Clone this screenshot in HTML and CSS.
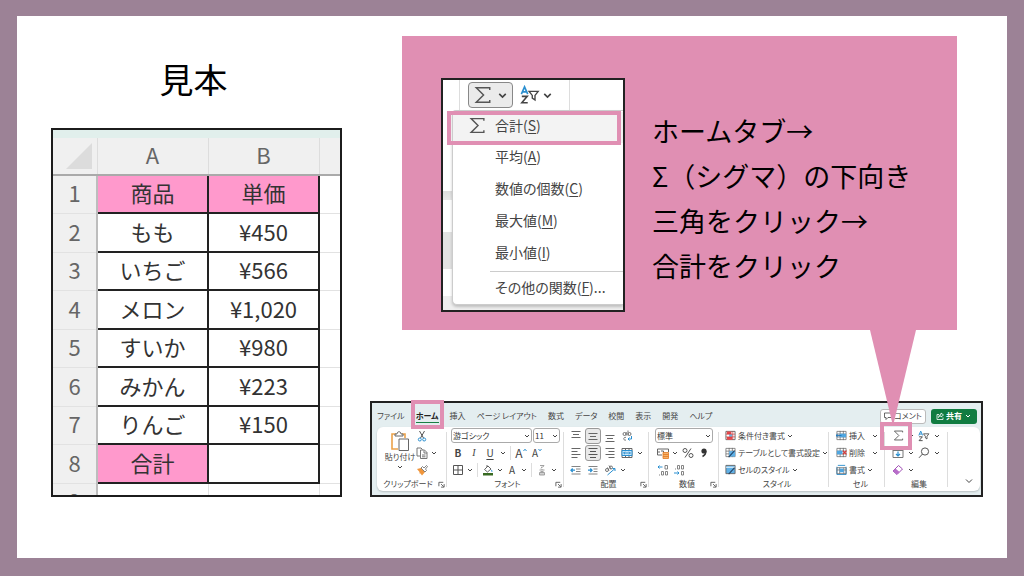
FILE: index.html
```html
<!DOCTYPE html>
<html lang="ja">
<head>
<meta charset="utf-8">
<title>見本</title>
<meta name="viewport" content="width=device-width, initial-scale=1">
<link rel="stylesheet" href="styles.css">
</head>
<body>
<svg class="defs" aria-hidden="true">
  <symbol id="chev" viewBox="0 0 8 8"><path d="M2 3l2 2 2-2" fill="none" stroke="#444" stroke-width="1"/></symbol>
  <symbol id="sigma" viewBox="0 0 16 16"><path d="M14 3.500V1.500H2L8.500 8 2 14.500H14V12.500" fill="none" stroke="#555" stroke-width="1.300"/></symbol>
  <symbol id="launch" viewBox="0 0 8 8"><path d="M1 6V1.500H6M3.500 3.500L6.500 6.500M7 3.500V7H3.500" fill="none" stroke="#555"/></symbol>
  <symbol id="sort" viewBox="0 0 22 20"><path d="M1.500 9L5 1 8.500 9M3 6.500H7" fill="none" stroke="#2a8fd0" stroke-width="1.800"/><path d="M2 11.500H8L2 18.500H8.500" fill="none" stroke="#444" stroke-width="1.700"/><path d="M10 6H20L16.500 10.500V15.500L13.500 13.500V10.500Z" fill="none" stroke="#444" stroke-width="1.500"/></symbol>
  <symbol id="cellgrid" viewBox="0 0 12 12"><path d="M1 1.500H11V10.500H1ZM1 4.500H11M1 7.500H11M4.500 1V11M8 1V11" fill="#fff" stroke="#666" stroke-width=".8"/></symbol>
</svg>
<main class="slide">
  <section class="sample">
    <h1 class="sample-title">見本</h1>
    <div class="sheet">
      <table class="cells">
        <thead>
          <tr><th class="corner"><svg viewBox="0 0 26 26"><path d="M26 0V26H0Z" fill="#dcdcdc"/></svg></th><th class="letter">A</th><th class="letter">B</th><th class="rest"></th></tr>
        </thead>
        <tbody>
          <tr><th>1</th><td class="pink">商品</td><td class="pink">単価</td><td class="blank"></td></tr>
          <tr><th>2</th><td>もも</td><td>¥450</td><td class="blank"></td></tr>
          <tr><th>3</th><td>いちご</td><td>¥566</td><td class="blank"></td></tr>
          <tr><th>4</th><td>メロン</td><td>¥1,020</td><td class="blank"></td></tr>
          <tr><th>5</th><td>すいか</td><td>¥980</td><td class="blank"></td></tr>
          <tr><th>6</th><td>みかん</td><td>¥223</td><td class="blank"></td></tr>
          <tr><th>7</th><td>りんご</td><td>¥150</td><td class="blank"></td></tr>
          <tr><th>8</th><td class="pink">合計</td><td></td><td class="blank"></td></tr>
          <tr><th>9</th><td class="blank"></td><td class="blank"></td><td class="blank"></td></tr>
        </tbody>
      </table>
    </div>
  </section>

  <section class="guide">
    <div class="callout">
      <div class="shot">
        <div class="shot-bar">
          <button class="sum-button" aria-label="合計"><svg class="sum-icon"><use href="#sigma"/></svg><svg class="sum-chev"><use href="#chev"/></svg></button>
          <button class="sort-button" aria-label="並べ替え"><svg class="sort-icon"><use href="#sort"/></svg><svg class="sum-chev"><use href="#chev"/></svg></button>
        </div>
        <div class="menu">
          <button class="item current"><svg class="item-icon"><use href="#sigma"/></svg>合計(<u>S</u>)<span class="ring"></span></button>
          <button class="item">平均(<u>A</u>)</button>
          <button class="item">数値の個数(<u>C</u>)</button>
          <button class="item">最大値(<u>M</u>)</button>
          <button class="item">最小値(<u>I</u>)</button>
          <button class="item more">その他の関数(<u>F</u>)...</button>
        </div>
      </div>
      <p class="steps">ホームタブ→<br>Σ&#xFF08;シグマ&#xFF09;の下向き<br>三角をクリック→<br>合計をクリック</p>
      <span class="tail"></span>
    </div>

    <div class="ribbon">
      <div class="ribbon-top">
        <nav class="tabs">
          <button>ファイル</button><button class="active">ホーム<span class="ring"></span></button><button>挿入</button><button>ページ レイアウト</button><button>数式</button><button>データ</button><button>校閲</button><button>表示</button><button>開発</button><button>ヘルプ</button>
        </nav>
        <button class="comment"><svg viewBox="0 0 8 8"><path d="M.5 1H7.500V5.500H4L2 7.500V5.500H.5Z" fill="none" stroke="#444" stroke-width=".8"/></svg>コメント</button>
        <button class="share"><svg viewBox="0 0 8 8"><path d="M3 2.500H1V7.500H7V5.500M2.500 5.500C3 3 4 2.500 5 2.500V1L7.500 3 5 5V3.800C4 3.800 3 4.300 2.500 5.500Z" fill="none" stroke="#fff" stroke-width=".8"/></svg>共有<svg viewBox="0 0 8 8"><path d="M2 3l2 2 2-2" fill="none" stroke="#fff"/></svg></button>
      </div>
      <div class="panel">
        <div class="group clipboard">
          <div class="paste-area">
            <button class="paste"><svg viewBox="0 0 20 20"><path d="M6 3H2V18H8M12 3H15V7" fill="none" stroke="#eba24a" stroke-width="1.600"/><path d="M5 5V3H7C7 0 11 0 11 3H13V5Z" fill="#fff" stroke="#666"/><path d="M9 8H18.500V19.500H9Z" fill="#fff" stroke="#666"/></svg>貼り付け<svg class="chev"><use href="#chev"/></svg></button>
            <div class="rows">
              <div class="row"><button class="ico" aria-label="切り取り"><svg viewBox="0 0 12 12"><path d="M3.500 1L7.500 8M8.500 1L4.500 8" fill="none" stroke="#555"/><circle cx="3.800" cy="9.500" r="1.500" fill="none" stroke="#2a8fd0"/><circle cx="8.200" cy="9.500" r="1.500" fill="none" stroke="#2a8fd0"/></svg></button></div>
              <div class="row"><button class="ico" aria-label="コピー"><svg viewBox="0 0 12 12"><path d="M4 9H1V1H5L6.500 2.500M4.500 3H8.500L11 5.500V11.500H4.500ZM8 3.500V6H11M6 8H9.500M6 9.800H9.500" fill="none" stroke="#666" stroke-width=".9"/></svg></button><svg class="chev"><use href="#chev"/></svg></div>
              <div class="row"><button class="ico" aria-label="書式のコピー"><svg viewBox="0 0 12 12"><path d="M1 5L5 4 9 8 6 11.500 4.500 9.500 3.500 9.500 3.500 8Z" fill="#f0963c"/><path d="M5 4L6.500 2.500 8 4 10.500 1.500 11.500 2.500 9.500 5 10.500 6.500 9 8Z" fill="#fff" stroke="#666" stroke-width=".8"/></svg></button></div>
            </div>
          </div>
          <div class="caption">クリップボード<svg class="launch"><use href="#launch"/></svg></div>
        </div>

        <div class="group font">
          <div class="row fields"><label class="field wide"><select aria-label="フォント"><option>游ゴシック</option></select><svg class="chev"><use href="#chev"/></svg></label><label class="field"><select aria-label="サイズ"><option>11</option></select><svg class="chev"><use href="#chev"/></svg></label></div>
          <div class="row letters"><button class="ico"><b>B</b></button><button class="ico slant"><i>I</i></button><button class="ico"><u>U</u></button><svg class="chev"><use href="#chev"/></svg><span class="sep"></span><button class="ico big">A<svg class="mark" viewBox="0 0 4 4"><path d="M.5 3L2 1.200 3.500 3" fill="none" stroke="#2a8fd0"/></svg></button><button class="ico">A<svg class="mark" viewBox="0 0 4 4"><path d="M.5 1L2 2.800 3.500 1" fill="none" stroke="#2a8fd0"/></svg></button></div>
          <div class="row letters tight"><button class="ico" aria-label="罫線"><svg viewBox="0 0 12 12"><path d="M1.500 1.500H10.500V10.500H1.500ZM6 1.500V10.500M1.500 6H10.500" fill="none" stroke="#555"/></svg></button><svg class="chev"><use href="#chev"/></svg><span class="sep"></span><button class="ico" aria-label="塗りつぶし"><svg viewBox="0 0 12 12"><path d="M2.500 5.500L6 2 9 5 5.500 8ZM5 3V1" fill="none" stroke="#555" stroke-width=".9"/><path d="M9.500 5.500L10.800 7.500H9Z" fill="#2a8fd0"/><path d="M1 9H11V11.500H1Z" fill="#386a22"/></svg></button><svg class="chev"><use href="#chev"/></svg><button class="ico">A</button><svg class="chev"><use href="#chev"/></svg><span class="sep"></span><button class="ico" aria-label="ふりがな"><svg viewBox="0 0 12 12"><path d="M4 1.500H8L6.500 3.500M6 2.500L5 4.500M3.500 6H8.500M6 5V6M4.500 7.500H7.500M3.500 8.500H8.500V11H3.500ZM5 8.500V11M7 8.500V11" fill="none" stroke="#999" stroke-width=".9"/></svg></button><svg class="chev"><use href="#chev"/></svg></div>
          <div class="caption">フォント<svg class="launch"><use href="#launch"/></svg></div>
        </div>

        <div class="group align">
          <div class="row"><button class="ico" aria-label="上揃え"><svg viewBox="0 0 12 12"><path d="M1.500 1.500H10.500M3 4.500H9M1.500 7.500H10.500" stroke="#666"/></svg></button><button class="ico on" aria-label="上下中央揃え"><svg viewBox="0 0 12 12"><path d="M1.500 3.500H10.500M3 6.500H9M1.500 9.500H10.500" stroke="#666"/></svg></button><button class="ico" aria-label="下揃え"><svg viewBox="0 0 12 12"><path d="M1.500 5.500H10.500M3 8.500H9M1.500 11.500H10.500" stroke="#666"/></svg></button><button class="ico" aria-label="折り返し"><svg viewBox="0 0 12 12"><g fill="none" stroke="#666" stroke-width=".9"><circle cx="3.500" cy="4" r="1.500"/><path d="M5.200 2V5.500M7 .5V5.500"/><circle cx="8.500" cy="4" r="1.500"/><path d="M5 7.500C2 6.500 2 11 5 10"/></g><path d="M10.500 6V9H7M8.500 7.500L7 9 8.500 10.500" fill="none" stroke="#2a8fd0"/></svg></button></div>
          <div class="row"><button class="ico" aria-label="左揃え"><svg viewBox="0 0 12 12"><path d="M1.500 1.500H10.500M1.500 4.500H7.500M1.500 7.500H10.500M1.500 10.500H7.500" stroke="#666"/></svg></button><button class="ico on" aria-label="中央揃え"><svg viewBox="0 0 12 12"><path d="M1.500 1.500H10.500M3 4.500H9M1.500 7.500H10.500M3 10.500H9" stroke="#555"/></svg></button><button class="ico" aria-label="右揃え"><svg viewBox="0 0 12 12"><path d="M1.500 1.500H10.500M4.500 4.500H10.500M1.500 7.500H10.500M4.500 10.500H10.500" stroke="#666"/></svg></button><button class="ico" aria-label="セルを結合"><svg viewBox="0 0 12 12"><path d="M1 1.500H11V10.500H1ZM4.500 1.500V3M8 1.500V3M4.500 9V10.500M8 9V10.500" fill="none" stroke="#666"/><path d="M1 3.500H11V8.500H1Z" fill="#cbe6f7" stroke="#2a8fd0"/><path d="M2.500 6H9.500M4 4.700L2.700 6 4 7.300M8 4.700L9.300 6 8 7.300" fill="none" stroke="#2a8fd0"/></svg></button><svg class="chev"><use href="#chev"/></svg></div>
          <div class="row"><button class="ico" aria-label="インデント解除"><svg viewBox="0 0 12 12"><path d="M1.500 2.500H10.500M6 5H10.500M6 7.500H10.500M1.500 10H10.500" stroke="#777" stroke-width=".9"/><path d="M5 6.200H1M2.700 4.500L1 6.200 2.700 8" fill="none" stroke="#2a8fd0" stroke-width="1.300"/></svg></button><button class="ico" aria-label="インデント"><svg viewBox="0 0 12 12"><path d="M1.500 2.500H10.500M6.500 5H10.500M6.500 7.500H10.500M1.500 10H10.500" stroke="#777" stroke-width=".9"/><path d="M1 6.200H5M3.300 4.500L5 6.200 3.300 8" fill="none" stroke="#2a8fd0" stroke-width="1.300"/></svg></button><button class="ico" aria-label="方向"><svg viewBox="0 0 12 12"><g fill="none" stroke="#666" stroke-width=".9"><circle cx="3" cy="6" r="1.500"/><path d="M3.500 3.500L5 6.500M5 1.500L7 5"/><circle cx="7" cy="3.500" r="1.500"/></g><path d="M3.500 11L11 4.500M8.500 4.500H11V7" fill="none" stroke="#2a8fd0"/></svg></button><svg class="chev"><use href="#chev"/></svg></div>
          <div class="caption">配置<svg class="launch"><use href="#launch"/></svg></div>
        </div>

        <div class="group number">
          <div class="row fields"><label class="field wide"><select aria-label="表示形式"><option>標準</option></select><svg class="chev"><use href="#chev"/></svg></label></div>
          <div class="row"><button class="ico" aria-label="通貨"><svg viewBox="0 0 12 12"><path d="M.5 2H11.500V5M.5 2V8H5M2 4V6M4 4H6.500V6" fill="none" stroke="#666"/><path d="M6 5.500H11.500V11.500H6ZM6 7.500H11.500M6 9.500H11.500" fill="#f6b26b" stroke="#e27a22" stroke-width=".8"/></svg></button><svg class="chev"><use href="#chev"/></svg><button class="ico" aria-label="パーセント"><svg viewBox="0 0 12 12"><g fill="none" stroke="#555"><circle cx="3" cy="3.500" r="2"/><circle cx="9" cy="8.500" r="2"/><path d="M9 1.500L3 10.500"/></g></svg></button><button class="ico" aria-label="桁区切り"><svg viewBox="0 0 12 12"><circle cx="6" cy="4" r="2.600" fill="#333"/><path d="M7.700 4C8 7 6.500 8.500 4.500 9.500" fill="none" stroke="#333" stroke-width="1.500"/></svg></button></div>
          <div class="row"><button class="ico" aria-label="小数点以下を増やす"><svg viewBox="0 0 12 12"><path d="M5.500 3H1M2.500 1.500L1 3 2.500 4.500" fill="none" stroke="#2a8fd0"/><path d="M8 1.500H10.500V5H8ZM4.500 7.500H6.500V11H4.500ZM8.500 7.500H10.500V11H8.500ZM2.500 10.500V11.500" fill="none" stroke="#777" stroke-width=".9"/></svg></button><button class="ico" aria-label="小数点以下を減らす"><svg viewBox="0 0 12 12"><path d="M1 9H6M4.500 7.500L6 9 4.500 10.500" fill="none" stroke="#2a8fd0"/><path d="M4.500 1.500H6.500V5H4.500ZM8.500 1.500H10.500V5H8.500ZM8.500 7.500H10.500V11H8.500ZM2.500 4.500V5.500" fill="none" stroke="#777" stroke-width=".9"/></svg></button></div>
          <div class="caption">数値<svg class="launch"><use href="#launch"/></svg></div>
        </div>

        <div class="group style">
          <div class="row"><button class="cmd"><svg viewBox="0 0 12 12"><path d="M1 1.500H11V10.500H1Z" fill="#fff" stroke="#666"/><path d="M2 1.500H7V4.500H2ZM2 7.500H8V10.500H2Z" fill="#e8484c"/><path d="M4.500 4.500H8V7.500H4.500Z" fill="#6db4e0"/><path d="M1 4.500H11M1 7.500H11M8.500 1.500V10.500" stroke="#c33" stroke-width=".7"/></svg>条件付き書式</button><svg class="chev"><use href="#chev"/></svg></div>
          <div class="row"><button class="cmd"><svg viewBox="0 0 12 12"><use href="#cellgrid"/><path d="M4.500 4.500H11V10.500H4.500Z" fill="#5fb0e6"/><path d="M4 11L10.500 4" stroke="#246" stroke-width="1.200"/></svg>テーブルとして書式設定</button><svg class="chev"><use href="#chev"/></svg></div>
          <div class="row"><button class="cmd"><svg viewBox="0 0 12 12"><path d="M1 1.500H11V10.500H1Z" fill="#5fb0e6" stroke="#666"/><path d="M1 3.500H11" stroke="#fff"/><path d="M4 11L10.500 4" stroke="#246" stroke-width="1.200"/></svg>セルのスタイル</button><svg class="chev"><use href="#chev"/></svg></div>
          <div class="caption">スタイル</div>
        </div>

        <div class="group insert">
          <div class="row"><button class="cmd"><svg viewBox="0 0 12 12"><use href="#cellgrid"/><path d="M4 4H11V8H4Z" fill="#4fa6e0"/><path d="M6 6H0M2 4L0 6 2 8" fill="none" stroke="#1c7ac0"/></svg>挿入</button><svg class="chev far"><use href="#chev"/></svg></div>
          <div class="row"><button class="cmd"><svg viewBox="0 0 12 12"><use href="#cellgrid"/><path d="M1 4H7V8H1Z" fill="#4fa6e0"/><path d="M7.500 4L11.500 8M11.500 4L7.500 8" stroke="#d33" stroke-width="1.200"/></svg>削除</button><svg class="chev far"><use href="#chev"/></svg></div>
          <div class="row"><button class="cmd"><svg viewBox="0 0 12 12"><path d="M2 1.500H10M1 3V11.500H11V3" fill="none" stroke="#2a8fd0"/><path d="M1 4H11V10.500H1ZM1 6.500H11M4 4V10.500M8.500 4V10.500" fill="none" stroke="#666" stroke-width=".8"/><path d="M4 5H8.500V9H4Z" fill="#4fa6e0"/></svg>書式</button><svg class="chev"><use href="#chev"/></svg></div>
          <div class="caption">セル</div>
        </div>

        <div class="group edit">
          <div class="row"><button class="ico sum" aria-label="合計"><svg><use href="#sigma"/></svg><span class="ring"></span></button><svg class="chev"><use href="#chev"/></svg><button class="ico" aria-label="並べ替え"><svg><use href="#sort"/></svg></button><svg class="chev"><use href="#chev"/></svg></div>
          <div class="row"><button class="ico" aria-label="フィル"><svg viewBox="0 0 12 12"><path d="M1 1.500H11V10.500H1ZM1 3.500H11" fill="none" stroke="#777"/><path d="M6 4.500V9M4 7L6 9 8 7" fill="none" stroke="#2a8fd0" stroke-width="1.200"/></svg></button><svg class="chev"><use href="#chev"/></svg><button class="ico" aria-label="検索"><svg viewBox="0 0 12 12"><circle cx="7" cy="4.500" r="3.600" fill="none" stroke="#555"/><path d="M4.500 7L1 10.800" stroke="#555"/></svg></button><svg class="chev"><use href="#chev"/></svg></div>
          <div class="row"><button class="ico" aria-label="クリア"><svg viewBox="0 0 12 12"><path d="M1 7L6.500 1.500 10.500 5 5 10.500Z" fill="#fff" stroke="#a04fb5"/><path d="M1 7L3.500 4.500 7.500 8 5 10.500Z" fill="#b86cca"/></svg></button><svg class="chev"><use href="#chev"/></svg></div>
          <div class="caption">編集</div>
        </div>
        <button class="collapse" aria-label="リボンを折りたたむ"><svg viewBox="0 0 8 8"><path d="M1 2.500l3 3 3-3" fill="none" stroke="#444"/></svg></button>
      </div>
    </div>
  </section>
</main>
</body>
</html>
```
FILE: styles.css
```css
* { box-sizing: border-box; }

body {
  margin: 0;
  font-family: "Noto Sans CJK JP", sans-serif;
  color: #444;
}

button {
  padding: 0;
  border: 0;
  background: none;
  color: inherit;
  font: inherit;
  font-feature-settings: "palt";
  white-space: nowrap;
}

svg { display: block; flex: none; }
.defs { position: absolute; width: 0; height: 0; }

.slide {
  display: grid;
  grid-template-columns: 291fr 613fr;
  gap: 28px;
  min-height: 100vh;
  padding: 20px 24px 0 34px;
  border: solid #9c8296;
  border-width: 16px 17px 18px;
  background: #fff;
}

.ring {
  position: absolute;
  z-index: 2;
  border: 4px solid #e08fb3;
}

/* Worksheet */
.sample-title {
  margin: 18px 0 24px;
  padding-right: 6px;
  color: #000;
  font-size: 34px;
  font-weight: 400;
  line-height: 50px;
  text-align: center;
}

.sheet {
  height: 369px;
  padding-top: 8px;
  overflow: hidden;
  border: 2px solid #1c1c1c;
  background: #e1efec;
}

.cells {
  width: 100%;
  border-collapse: collapse;
  table-layout: fixed;
  background: #fff;
  color: #333;
  font-size: 22px;
  line-height: 30px;
  text-align: center;
}

.cells th {
  width: 44px;
  padding: 0 0 4px;
  border-top: 1px solid #e2e2e2;
  border-right: 2px solid #bdbdbd;
  background: #f0f0f0;
  color: #666;
  font-weight: 400;
}

.cells thead th {
  height: 37px;
  border-top: 0;
  border-right: 1px solid #ddd;
  border-bottom: 2px solid #aaa;
}

.cells .letter { width: auto; }
.cells .rest { width: 21px; border-right: 0; }
.cells .corner { padding: 0; }
.corner svg { width: 26px; height: 26px; margin-left: 13px; }
.cells tbody tr { height: 38px; }
.cells tbody tr:nth-child(even) { height: 39px; }
.cells td { padding: 0 0 4px; border: 2px solid #222; }
.cells td.pink { background: #ff99cc; }
.cells td.blank { border-color: #e2e2e2; border-width: 1px 0 1px 1px; }

/* Callout */
.callout {
  display: flex;
  position: relative;
  gap: 27px;
  margin: 0 26px 71px 32px;
  padding: 42px 0 18px 39px;
  background: #e08fb3;
}

.tail {
  position: absolute;
  z-index: 3;
  top: 100%;
  right: 41px;
  width: 46px;
  height: 96px;
  background: #e08fb3;
  clip-path: polygon(0 0, 100% 0, 50% 100%);
}

.steps {
  margin: 30px 0 0;
  color: #000;
  font-size: 27px;
  line-height: 45px;
  white-space: nowrap;
}

.shot {
  flex: none;
  width: 184px;
  height: 234px;
  padding-left: 9px;
  overflow: hidden;
  border: 2px solid #222;
  background: linear-gradient(#fff 111px, #ddd 111px, #e8e8e8 120px, #fff 120px, #fff 152px, #e3e3e3 152px, #e3e3e3 189px, #fff 189px, #fff 216px, #eee 216px);
}

.shot-bar {
  display: flex;
  align-items: center;
  width: 111px;
  height: 30px;
  margin-left: 7px;
  padding-left: 8px;
  gap: 7px;
  border: solid #ddd;
  border-width: 0 1px;
}

.sum-button, .sort-button { display: flex; align-items: center; flex: none; height: 26px; gap: 4px; }
.sum-button { width: 45px; padding-left: 5px; border: 1px solid #888; border-radius: 4px; background: #ebebeb; }
.sum-icon { width: 18px; height: 18px; }
.sum-chev { width: 13px; height: 13px; }
.sort-button { gap: 1px; }
.sort-icon { width: 20px; height: 20px; }

.menu {
  height: 195px;
  padding-top: 1px;
  border: solid #ccc;
  border-width: 1px 0 1px 1px;
  border-radius: 4px 0 0 5px;
  background: #fff;
  box-shadow: 0 2px 3px #0003;
}

.item {
  display: flex;
  position: relative;
  width: 100%;
  height: 32px;
  padding-left: 42px;
  font-size: 14px;
  line-height: 26px;
}

.item u, .letters u { text-underline-offset: 2px; }
.item.current { height: 31px; background: #f3f3f3; }
.item-icon { position: absolute; top: 5px; left: 16px; width: 17px; height: 17px; }
.item .ring { inset: -1px 2px -2px -6px; }
.item.more { width: auto; min-width: 100%; margin-left: 37px; padding-left: 5px; border-top: 1px solid #ccc; line-height: 30px; }

/* Ribbon */
.ribbon {
  height: 96px;
  padding: 0 1px 4px 5px;
  border: 2px solid #222;
  background: #e4eef0;
  font-size: 8px;
  line-height: 12px;
}

.ribbon-top { display: flex; align-items: center; height: 24px; padding-right: 3px; gap: 5px; }
.tabs { display: flex; flex: 1; gap: 11px; padding-top: 2px; }
.tabs .active { position: relative; color: #222; font-weight: 700; box-shadow: 0 1px #1a7f45; }
.tabs .ring { inset: -10px -5px -7px; }

.comment, .share {
  display: flex;
  align-items: center;
  justify-content: center;
  width: 46px;
  height: 15px;
  margin-top: 2px;
  gap: 2px;
  border-radius: 3px;
}

.comment { border: 1px solid #bbb; background: #fff; }
.share { background: #107c41; color: #fff; font-weight: 700; }
.comment svg, .share svg { width: 8px; height: 8px; }

.panel {
  display: grid;
  grid-template-columns: 70fr 117fr 85fr 70fr 110fr 56fr 63fr 32fr;
  height: 64px;
  border-radius: 6px;
  background: #fff;
  box-shadow: 0 1px 2px #0003;
}

.group {
  position: relative;
  min-width: 0;
  padding-left: 4px;
}

.group::after {
  content: "";
  position: absolute;
  top: 5px;
  right: 0;
  bottom: 4px;
  width: 1px;
  background: #ddd;
}

.clipboard { padding-left: 9px; }
.number { padding-left: 6px; }
.style { padding-left: 6px; }
.insert { padding-left: 7px; }
.edit { padding-left: 5px; }

.row { display: flex; align-items: center; height: 17px; gap: 1px; }
.paste-area { display: flex; gap: 1px; }
.paste { display: flex; flex-direction: column; align-items: center; width: 28px; padding-top: 4px; }
.paste svg { width: 20px; height: 20px; }
.paste .chev { width: 8px; height: 8px; }
.clipboard .caption { margin-left: -9px; padding-right: 8px; }

.ico { display: flex; position: relative; align-items: center; justify-content: center; flex: none; width: 14px; height: 16px; }
.ico svg { width: 12px; height: 12px; }
.ico .mark { width: 4px; height: 4px; margin-bottom: 6px; }
.ico.on { border: 1px solid #999; border-radius: 3px; background: #e9e9e9; }
.align .ico { width: 16px; }
.number .ico { width: 15px; }
.chev { width: 8px; height: 8px; }
.chev.far { margin-left: 5px; }
.sep { width: 1px; height: 14px; margin: 0 2px; background: #ddd; }
.letters { gap: 2px; font-size: 10px; }
.letters .sep { margin: 0 1px; }
.letters .big { font-size: 12px; }
.letters .slant { font-family: "Liberation Serif", serif; }
.tight { gap: 1px; }
.tight .sep { margin: 0 2px; }

.field { display: flex; align-items: center; width: 27px; height: 15px; border: 1px solid #aaa; border-radius: 3px; background: #fff; }
.field.wide { width: 81px; }
.number .field.wide { width: 58px; }
.field select {
  flex: 1;
  min-width: 0;
  padding: 0 0 0 1px;
  border: 0;
  appearance: none;
  background: none;
  color: #333;
  font: 8px/12px "Noto Sans CJK JP", sans-serif;
  font-feature-settings: "palt";
}

.cmd { display: flex; align-items: center; gap: 2px; }
.cmd > svg { width: 11px; height: 11px; }
.edit .ico { width: 16px; }
.edit .sum svg { width: 11px; height: 11px; }
.sum .ring { inset: -6px -6px -6px -10px; }

.caption {
  display: flex;
  position: relative;
  align-items: center;
  justify-content: center;
  height: 12px;
  font-feature-settings: "palt";
}

.launch { position: absolute; right: 2px; width: 7px; height: 7px; }
.collapse { display: flex; align-items: flex-end; justify-content: center; padding: 0 0 6px 10px; }
.collapse svg { width: 8px; height: 8px; }
```
